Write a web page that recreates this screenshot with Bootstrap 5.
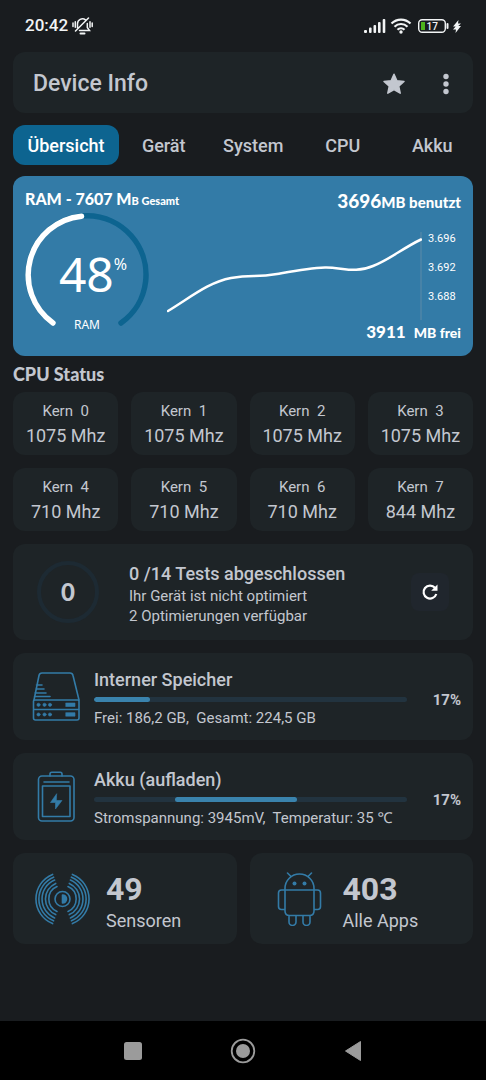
<!DOCTYPE html>
<html lang="de" data-bs-theme="dark">
<head>
<meta charset="utf-8">
<meta name="viewport" content="width=device-width, initial-scale=1">
<title>Device Info</title>
<link href="https://cdn.jsdelivr.net/npm/bootstrap@5.3.0/dist/css/bootstrap.min.css" rel="stylesheet">
<style>
  :root { --blue: #337ba7; --deep: #0d6490; --panel: #1e2427; --ink: #c3c7cf; --gap: 13px; }
  body { background: #191c1f; color: var(--ink); font-family: Roboto, "Noto Sans", sans-serif; }
  .rounded-font { font-family: Lato, Roboto, sans-serif; font-weight: 900; }
  .statusbar { height: 52px; padding: 0 25px; color: #f2f4f5; font-size: 17px; font-weight: 500; }
  .battery { margin-left: 6px; }
  .screen { padding: 0 var(--gap); }
  .panel { background: var(--panel); border-radius: 12px; }
  .appbar { height: 61px; padding: 2px 15px 0 20px; }
  .appbar h1 { font-size: 23px; font-weight: 500; color: inherit; }
  .plain-btn { background: none; border: 0; padding: 0; color: inherit; line-height: 1; }
  .tabs { margin: 12px -4px 11px 0; }
  .tabs .nav-link { height: 40px; padding: 0; border-radius: 12px; font-size: 18px; font-weight: 500; color: var(--ink); }
  .tabs .nav-item { flex: 1 1 0; }
  .tabs .nav-item:first-child { flex: 0 0 106px; }
  .tabs .nav-link.active { background: var(--deep); color: #fff; }
  .ram { background: var(--blue); border-radius: 12px; padding: 12px 12px 11px; color: #fff; }
  .ram-head { height: 25px; }
  .ram-title { font-size: 16px; line-height: 22px; }
  .ram-title small { font-size: 11px; font-weight: inherit; }
  .fs-used { font-size: 19px; line-height: 26px; }
  .fs-used .unit { font-size: 15px; }
  .fs-free { font-size: 17px; line-height: 24px; }
  .fs-free .unit { font-size: 14px; }
  .gauge { width: 124px; height: 124px; }
  .gauge-text { font-family: "Noto Sans", sans-serif; }
  .gauge-num { font-size: 48px; line-height: 122px; padding-left: 12px; }
  .gauge-num sup { font-size: 16px; top: -22px; }
  .gauge-label { font-size: 12px; line-height: 20px; bottom: 2px; }
  .ram-side { padding: 19px 0 0 18px; min-width: 0; }
  .ram-chart { height: 88px; min-width: 0; }
  .ticks { font-size: 11px; line-height: 14px; gap: 15px; width: 33px; margin-left: 6px; }
  .section-title { font-size: 18px; line-height: 36px; color: inherit; }
  .tile-gap { --bs-gutter-x: 13px; --bs-gutter-y: 13px; }
  .core { height: 63px; }
  .core-name { font-size: 15px; line-height: 22px; white-space: pre; }
  .core-freq { font-size: 18px; line-height: 28px; }
  .stack { gap: var(--gap); padding-top: var(--gap); }
  .tests { padding: 14px 24px; }
  .score { width: 62px; height: 62px; border: 4px solid #1d2a33; font-size: 24px; margin-right: 30px; }
  .item-title { font-size: 18px; line-height: 24px; font-weight: 500; }
  .item-text { font-size: 15px; line-height: 20px; }
  .refresh { width: 38px; height: 38px; border-radius: 8px; background: #20262d; color: #fff; }
  .meter { padding: 11px 12px 11px 19px; }
  .meter .progress { height: 5px; margin: 5px 0; background: #22333f; --bs-progress-bar-bg: #3a83ad; }
  .meter .progress-bar { border-radius: 3px; }
  .meter .item-text { line-height: 22px; white-space: pre; }
  .meter-icon { width: 50px; margin-right: 12px; }
  .meter-value { width: 54px; font-size: 15px; font-weight: 700; }
  .line-icon { fill: none; stroke: var(--blue); stroke-width: 1.6; stroke-linecap: round; stroke-linejoin: round; }
  .count { height: 91px; padding-left: 22px; gap: 16px; color: var(--ink); }
  .count-num { font-size: 32px; line-height: 36px; font-weight: 700; }
  .count-label { font-size: 18px; line-height: 28px; }
  .sysnav { height: 59px; background: #000; }
  .sysnav .plain-btn { width: 110px; height: 100%; color: #9b9b9b; }
</style>
</head>
<body class="d-flex flex-column min-vh-100">

<div class="statusbar d-flex align-items-center justify-content-between">
  <div class="d-flex align-items-center gap-1">
    <span>20:42</span>
    <svg width="21" height="18" viewBox="0 0 21 18" fill="none" stroke="currentColor" stroke-width="1.5" stroke-linecap="round"><path d="M5.500 11V7a5 5 0 0 1 8-4.200M15.300 6.500V10.500L17.500 13.500H7.500M3.500 14 16.500 1M1 6v3.500M3.300 4.800v5.500M18 4.800v5.500M20.200 6v3.500"/><path d="M8.500 16.500h4" stroke-width="2"/></svg>
  </div>
  <div class="d-flex align-items-center">
    <svg width="22" height="14" viewBox="0 0 22 14" fill="currentColor"><rect y="11" width="3" height="3" rx="1"/><rect x="5" y="8.500" width="2.600" height="5.500" rx="1"/><rect x="9.500" y="6" width="2.600" height="8" rx="1"/><rect x="14" y="3" width="2.600" height="11" rx="1"/><rect x="18.700" width="2.600" height="14" rx="1"/></svg>
    <svg class="ms-1" width="22" height="16" viewBox="0 0 22 16" fill="none" stroke="currentColor" stroke-width="2.200"><path d="M1.500 5.500a13.500 13.500 0 0 1 19 0M4.500 8.700a9.200 9.200 0 0 1 13 0M7.500 11.700a5 5 0 0 1 7 0"/><circle cx="11" cy="14" r="1.700" fill="currentColor" stroke="none"/></svg>
    <svg class="battery" width="31" height="14" viewBox="0 0 31 14"><rect x=".7" y=".7" width="26.600" height="12.600" rx="3.500" fill="none" stroke="currentColor" stroke-width="1.400"/><rect x="3" y="3" width="4" height="8" fill="#4db51c"/><path d="M29.500 5v4" stroke="currentColor" stroke-width="2" stroke-linecap="round"/><text x="8.500" y="11" font-size="10" fill="currentColor">17</text></svg>
    <svg class="ms-1" width="8" height="13" viewBox="0 0 8 13" fill="currentColor"><path d="M5.500 0 0 6.500h2.700L0 9.500h3L2.500 13 8 6H5.300L8 3.500H5z"/></svg>
  </div>
</div>

<main class="screen flex-grow-1">
  <header class="appbar panel d-flex align-items-center">
    <h1 class="m-0 flex-grow-1">Device Info</h1>
    <button class="plain-btn" type="button" aria-label="Favorit">
      <svg width="24" height="24" viewBox="0 0 24 24" fill="currentColor" stroke="currentColor" stroke-width="1.500" stroke-linejoin="round"><path d="m12 2.200 2.900 6.500 7.100.8-5.300 4.700 1.500 7L12 17.600l-6.200 3.600 1.500-7L2 9.500l7.100-.8z"/></svg>
    </button>
    <button class="plain-btn ms-4 ps-1" type="button" aria-label="Menü">
      <svg width="24" height="24" viewBox="0 0 24 24" fill="currentColor"><circle cx="12" cy="4.500" r="2.700"/><circle cx="12" cy="12" r="2.700"/><circle cx="12" cy="19.500" r="2.700"/></svg>
    </button>
  </header>

  <nav class="tabs" aria-label="Bereiche">
    <ul class="nav flex-nowrap text-center">
      <li class="nav-item"><a class="nav-link active d-flex align-items-center justify-content-center" href="#">Übersicht</a></li>
      <li class="nav-item"><a class="nav-link d-flex align-items-center justify-content-center" href="#">Gerät</a></li>
      <li class="nav-item"><a class="nav-link d-flex align-items-center justify-content-center" href="#">System</a></li>
      <li class="nav-item"><a class="nav-link d-flex align-items-center justify-content-center" href="#">CPU</a></li>
      <li class="nav-item"><a class="nav-link d-flex align-items-center justify-content-center" href="#">Akku</a></li>
    </ul>
  </nav>

  <section class="ram">
    <div class="ram-head rounded-font d-flex justify-content-between text-nowrap">
      <div class="ram-title">RAM - 7607 M<small>B Gesamt</small></div>
      <div class="fs-used">3696<span class="unit">MB benutzt</span></div>
    </div>
    <div class="d-flex">
      <div class="gauge position-relative flex-shrink-0 text-center">
        <svg class="d-block" width="124" height="124" viewBox="0 0 124 124" fill="none" stroke-width="5.500" stroke-linecap="round"><path d="M28 110A59 59 0 1 1 96 110" stroke="#0d6490"/><path d="M28 110A59 59 0 0 1 56.500 3.200" stroke="#fff"/></svg>
        <div class="gauge-text gauge-num position-absolute top-0 start-0 w-100 text-nowrap">48<sup>%</sup></div>
        <div class="gauge-text gauge-label position-absolute start-0 w-100">RAM</div>
      </div>
      <div class="ram-side flex-grow-1">
        <div class="d-flex">
          <svg class="ram-chart flex-grow-1" viewBox="0 0 255 88" width="100" preserveAspectRatio="none" fill="none"><path d="M254 0v88" stroke="#5c8ba8" stroke-width="1" vector-effect="non-scaling-stroke"/><path d="M1 79C24 65 42 50 64 46S88 46 110 42S142 36 158 35.500S188 42 206 34C222 28 236 16 254 7.500" stroke="#fff" stroke-width="2.500" stroke-linecap="round" vector-effect="non-scaling-stroke"/></svg>
          <div class="ticks d-flex flex-column"><span>3.696</span><span>3.692</span><span>3.688</span></div>
        </div>
        <div class="fs-free rounded-font text-end">3911&nbsp; <span class="unit">MB frei</span></div>
      </div>
    </div>
  </section>

  <h2 class="section-title rounded-font m-0">CPU Status</h2>
  <section class="row row-cols-4 tile-gap text-center text-nowrap">
    <div class="col"><div class="core panel pt-2"><div class="core-name">Kern  0</div><div class="core-freq">1075 Mhz</div></div></div>
    <div class="col"><div class="core panel pt-2"><div class="core-name">Kern  1</div><div class="core-freq">1075 Mhz</div></div></div>
    <div class="col"><div class="core panel pt-2"><div class="core-name">Kern  2</div><div class="core-freq">1075 Mhz</div></div></div>
    <div class="col"><div class="core panel pt-2"><div class="core-name">Kern  3</div><div class="core-freq">1075 Mhz</div></div></div>
    <div class="col"><div class="core panel pt-2"><div class="core-name">Kern  4</div><div class="core-freq">710 Mhz</div></div></div>
    <div class="col"><div class="core panel pt-2"><div class="core-name">Kern  5</div><div class="core-freq">710 Mhz</div></div></div>
    <div class="col"><div class="core panel pt-2"><div class="core-name">Kern  6</div><div class="core-freq">710 Mhz</div></div></div>
    <div class="col"><div class="core panel pt-2"><div class="core-name">Kern  7</div><div class="core-freq">844 Mhz</div></div></div>
  </section>

  <div class="stack d-flex flex-column">
    <section class="tests panel d-flex align-items-center">
      <div class="score rounded-font rounded-circle d-flex align-items-center justify-content-center flex-shrink-0">0</div>
      <div class="flex-grow-1 pt-1">
        <div class="item-title">0 /14 Tests abgeschlossen</div>
        <div class="item-text">Ihr Gerät ist nicht optimiert</div>
        <div class="item-text">2 Optimierungen verfügbar</div>
      </div>
      <button class="plain-btn refresh d-flex align-items-center justify-content-center" type="button" aria-label="Aktualisieren">
        <svg width="18" height="18" viewBox="0 0 18 18" fill="none" stroke="currentColor" stroke-width="2.200"><path d="M15.300 11A6.500 6.500 0 1 1 14 4.800"/><path d="M16.500 1.500v6.300h-6.300z" fill="currentColor" stroke="none"/></svg>
      </button>
    </section>

    <section class="meter panel d-flex align-items-center">
      <svg class="meter-icon line-icon flex-shrink-0" height="52" viewBox="0 0 50 52"><path d="M2 29 7 4.500Q7.500 2 10 2H38Q40.500 2 41 4.500L47 29M4.500 14H10M4 18H12M3 22H14M2.500 25.500H18"/><rect x="1.500" y="29" width="45.500" height="9.500" rx="1"/><path d="M1.500 38.500V47Q1.500 49 3.500 49H45Q47 49 47 47V38.500"/><g fill="#337ba7" stroke-width=".6"><circle cx="6.500" cy="33.800" r="1.600"/><circle cx="12.500" cy="33.800" r="1.600"/><circle cx="18" cy="33.800" r="1.600"/><circle cx="6.500" cy="43.500" r="1.600"/><circle cx="12.500" cy="43.500" r="1.600"/><circle cx="18" cy="43.500" r="1.600"/><rect x="34" y="32" width="9" height="3.500"/><rect x="34" y="41.700" width="9" height="3.500"/></g></svg>
      <div class="flex-grow-1 pt-1">
        <div class="item-title">Interner Speicher</div>
        <div class="progress" role="progressbar" aria-label="Speicher"><div class="progress-bar" style="width:18%"></div></div>
        <div class="item-text">Frei: 186,2 GB,  Gesamt: 224,5 GB</div>
      </div>
      <div class="meter-value text-end pt-2">17%</div>
    </section>

    <section class="meter panel d-flex align-items-center">
      <svg class="meter-icon line-icon flex-shrink-0" height="52" viewBox="0 0 50 52"><rect x="6.500" y="5" width="35.500" height="45" rx="3.500"/><path d="M18 5V3Q18 1.300 19.700 1.300H28.300Q30 1.300 30 3V5M12 11H37"/><rect x="10.500" y="15" width="27.500" height="30.500"/><path d="M24.500 23 18.500 31.500H23.500V38L30 29.500H24.500z" fill="#337ba7" stroke-width=".6"/></svg>
      <div class="flex-grow-1 pt-1">
        <div class="item-title">Akku (aufladen)</div>
        <div class="progress" role="progressbar" aria-label="Akku"><div class="progress-bar" style="width:39%;margin-left:26%"></div></div>
        <div class="item-text">Stromspannung: 3945mV,  Temperatur: 35 ℃</div>
      </div>
      <div class="meter-value text-end pt-2">17%</div>
    </section>

    <section class="row row-cols-2 tile-gap gy-0">
      <div class="col">
        <a class="count panel d-flex align-items-center text-decoration-none" href="#">
          <svg class="line-icon" width="55" height="52" viewBox="0 0 55 52"><circle cx="27.500" cy="26" r="7.500"/><path d="M27.500 22a4 4 0 0 1 0 8z" fill="#337ba7"/><g id="waves"><path d="M22 13.600A13.500 13.500 0 0 0 22 38.400M20.700 10.400A17 17 0 0 0 20.700 41.600M19.600 7.100A20.500 20.500 0 0 0 19.600 44.900M18.600 4.200A23.500 23.500 0 0 0 18.600 47.800M17.600 1.400A26.500 26.500 0 0 0 17.600 50.600"/></g><use href="#waves" transform="translate(55) scale(-1 1)"/></svg>
          <div class="pt-2"><div class="count-num">49</div><div class="count-label">Sensoren</div></div>
        </a>
      </div>
      <div class="col">
        <a class="count panel d-flex align-items-center text-decoration-none" href="#">
          <svg class="line-icon" width="55" height="54" viewBox="0 0 55 54"><path d="M13 18V16.500A14.500 14.500 0 0 1 42 16.500V18ZM13 18V39Q13 43.500 17.500 43.500H37.500Q42 43.500 42 39V18M19 4.500 15.500 1M36 4.500 39.500 1M13 18H9.500Q6.500 18 6.500 21V34.500Q6.500 37.500 9.500 37.500H13M42 18H45.500Q48.500 18 48.500 21V34.500Q48.500 37.500 45.500 37.500H42M17 43.500V50A3.500 3.500 0 0 0 24 50V43.500M31 43.500V50A3.500 3.500 0 0 0 38 50V43.500"/><g fill="#337ba7" stroke="none"><circle cx="22.500" cy="11.500" r="2"/><circle cx="32.500" cy="11.500" r="2"/></g></svg>
          <div class="pt-2"><div class="count-num">403</div><div class="count-label">Alle Apps</div></div>
        </a>
      </div>
    </section>
  </div>
</main>

<footer class="sysnav d-flex justify-content-center">
  <button class="plain-btn" type="button" aria-label="Übersicht"><svg width="18" height="18"><rect width="18" height="18" rx="2.500" fill="currentColor"/></svg></button>
  <button class="plain-btn" type="button" aria-label="Startseite"><svg width="26" height="26" viewBox="0 0 26 26"><circle cx="13" cy="13" r="11.300" fill="none" stroke="currentColor" stroke-width="1.800"/><circle cx="13" cy="13" r="7" fill="currentColor"/></svg></button>
  <button class="plain-btn" type="button" aria-label="Zurück"><svg width="18" height="22" viewBox="0 0 18 22"><path d="M1.500 11 16.500 1.500V20.500z" fill="currentColor" stroke="currentColor" stroke-linejoin="round"/></svg></button>
</footer>
<script src="https://cdn.jsdelivr.net/npm/bootstrap@5.3.0/dist/js/bootstrap.bundle.min.js"></script>
</body>
</html>
